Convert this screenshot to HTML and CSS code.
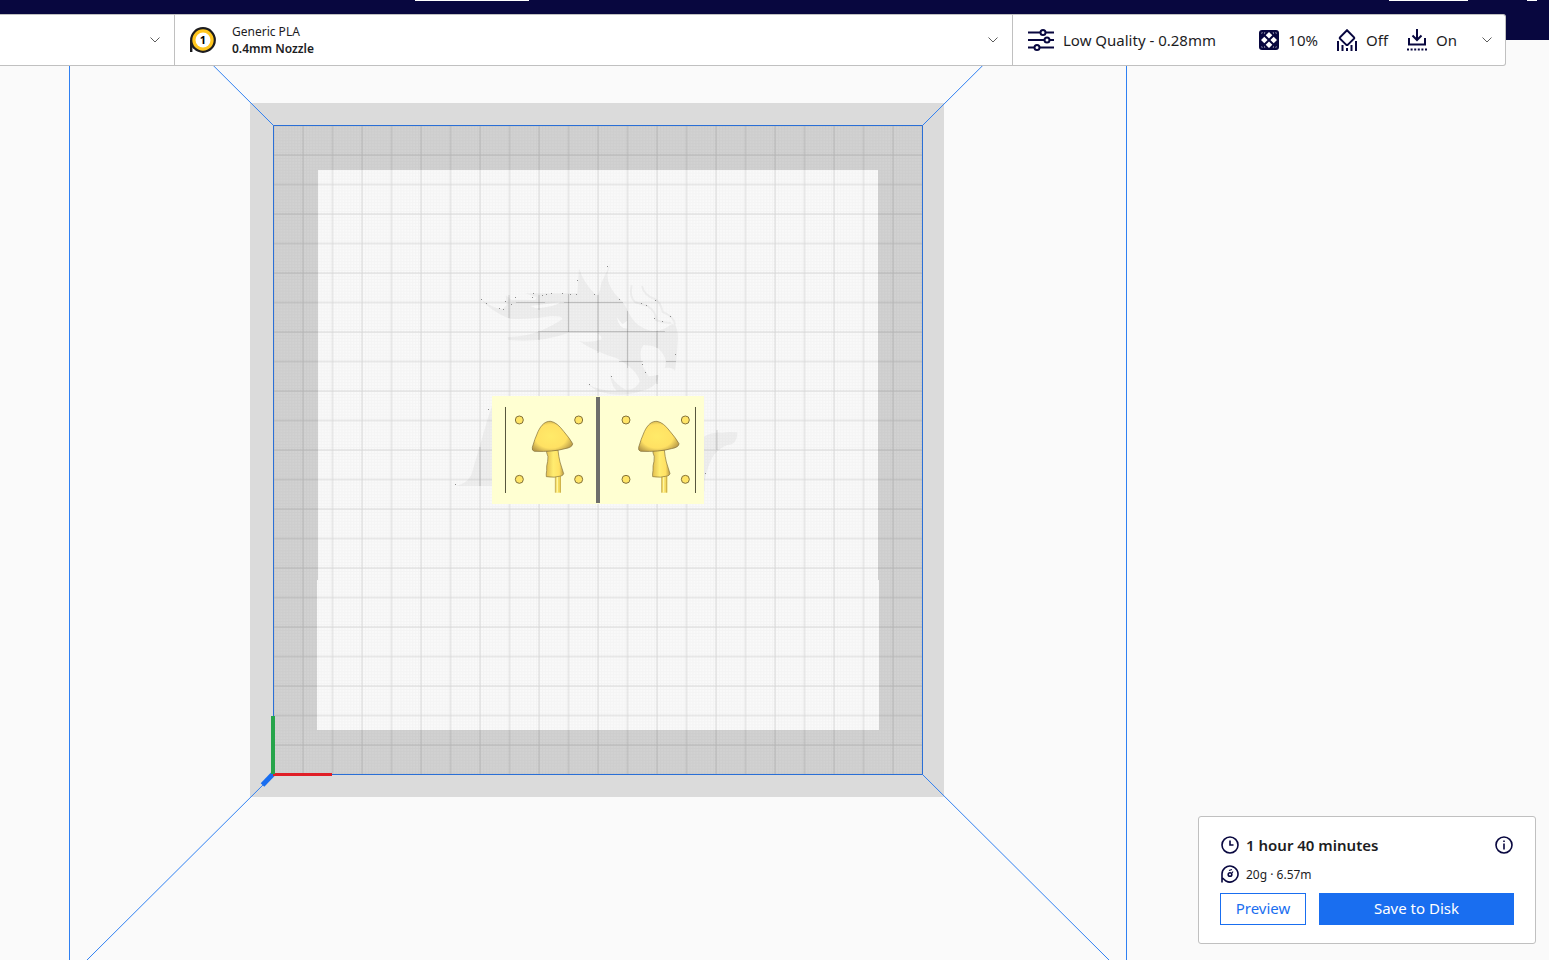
FILE: index.html
```html
<!DOCTYPE html>
<html lang="en">
<head>
<meta charset="utf-8">
<title>Print preparation</title>
<link rel="stylesheet" href="styles.css">
</head>
<body>
<div class="app">
  <svg class="scene" viewBox="0 0 1549 960" preserveAspectRatio="xMinYMin slice" role="img" aria-label="Build plate, top view">
    <defs>
      <pattern id="fine" x="273.5" y="125.5" width="2.95" height="2.95" patternUnits="userSpaceOnUse">
        <path d="M0 .5H2.95M.5 0V2.95" stroke="#000" stroke-opacity=".025" fill="none"/>
      </pattern>
      <pattern id="coarse" x="273.5" y="125.5" width="29.5" height="29.5" patternUnits="userSpaceOnUse">
        <path d="M0 0H29.5M0 29.5H29.5M0 0V29.5M29.5 0V29.5" stroke="#000" stroke-opacity=".12" fill="none"/>
      </pattern>
      <radialGradient id="cap" cx=".46" cy=".5" r=".6">
        <stop offset="0" stop-color="#ffea69"/><stop offset=".65" stop-color="#ffe163"/><stop offset="1" stop-color="#b89a48"/>
      </radialGradient>
      <linearGradient id="stem">
        <stop offset="0" stop-color="#e2bf50"/><stop offset=".4" stop-color="#ffec70"/><stop offset=".75" stop-color="#ffe163"/><stop offset="1" stop-color="#b89a48"/>
      </linearGradient>
      <g id="mushroom">
        <path d="M346 270H363V323H346Z" fill="#f5dc5e"/>
        <path d="M352 274V323" stroke="#fff6a0" stroke-width="4"/>
        <path d="M346 274V323M361 274V323" stroke="#b09440" stroke-width="2"/>
        <path d="M320 197L354 195Q356 215 360 231L371 266Q369 272 363 273Q344 279 319 275Q318 268 320 257Q319 242 323 229Q326 213 320 203Z" fill="url(#stem)" stroke="#82703a" stroke-width="2"/>
        <path d="M332 109C316 108 304 119 294 140Q284 162 277 187Q275 197 283 199Q340 201 375 191Q398 187 398 176Q389 160 371 139Q351 112 332 109Z" fill="url(#cap)" stroke="#7d6a36" stroke-width="2"/>
      </g>
      <g id="pin">
        <circle r="12" fill="#ffe566" stroke="#82703a" stroke-width="3"/>
      </g>
    </defs>

    <path d="M250 103H944V797H250Z" fill="#dbdbdb"/>
    <path d="M273 125H923V775H273Z" fill="#d2d2d2"/>
    <path d="M318 170H878V580H879V730H317V580H318Z" fill="#fafafa"/>

    <g fill="#000" fill-opacity=".045" transform="translate(440 250) scale(.33333)">
      <path d="M123 148Q155 174 187 177L200 165L197 135L214 149L285 150L290 142L255 130H412L417 54Q429 96 467 134H474Q482 118 484 98L512 39L502 73Q502 114 542 149C568 177 566 207 605 231Q650 258 694 223L705 223Q717 245 713 280L710 323L705 364Q700 350 674 354Q683 330 665 307Q653 285 610 286Q595 304 608 348L626 379L656 375C654 405 630 418 604 423Q540 445 473 424L436 399Q480 424 530 423C510 399 515 385 508 371Q529 405 557 419Q584 422 599 395Q592 360 530 325Q459 303 417 273Q454 280 484 268Q486 257 471 249L385 249Q299 280 204 270L203 261Q268 258 298 244Q343 225 366 208Q370 197 331 199Q277 209 208 206Q152 184 123 148Z"/>
      <path d="M575 106Q567 141 586 157L623 168Q650 187 648 210Q670 220 694 218M606 108Q612 136 644 147Q662 156 668 186Q701 198 705 223" fill="none" stroke="#000" stroke-opacity=".045" stroke-width="6"/>
      <path d="M530 201Q541 217 548 222L562 212V235Q538 238 530 201Z" fill="#fff" fill-opacity=".8"/>
      <path d="M270 168L360 157Q348 170 290 175Z" fill="#fff" fill-opacity=".8"/>
      <path d="M146 478L156 450V690H48Q82 681 94 656Z" transform="translate(0 18)"/>
      <path d="M792 542Q815 528 845 530Q865 526 892 529Q892 567 862 567Q842 575 823 595Q803 626 794 675V706H738V542Z" transform="translate(0 18)"/>
    </g>
    <path d="M273 125H923V775H273Z" fill="url(#fine)"/>
    <path d="M273 125H923V775H273Z" fill="url(#coarse)"/>
    <g stroke="#000" stroke-opacity=".14" fill="none">
      <path d="M568.5 294V332M538 331.5H665M516 302.5H545M564 302.5H623M627.5 311V368M619 361.5H643M666 361.5H676"/>
    </g>
    <g stroke="#000" stroke-opacity=".07" stroke-width="2" fill="none">
      <path d="M598 295V353M657 331V348M539 295V310M539 332V340M480 447V486M509 295V318M657 375V384M717 430V450"/>
    </g>
    <path d="M481 299h1m4 4h1m12 5h1m3 1h1m1-8h1m5 3h1m3-7h1m16 0h1m0-4h1m8 2h1m3-1h1m4-1h1m10 0h1m7 1h1m5 0h1m0-14h1m16 14h1m12-28h1m11 33h1m21 4h1m4 2h1m8-5h1m-2 18h1m7 3h1m7-5h1m4 38h1m-34 10h1m2 8h1m-35 4h1m-23 8h1M488 409h1M455 484h1M705 473h1" transform="translate(0 .5)" stroke="#8b8b8b"/>

    <g fill="none" stroke="#2f80f2">
      <path d="M69.5 0V960M1126.5 0V960"/>
      <path d="M147.500 0L273.500 125.500M1048.500 0L922.500 125.500M273.500 774.500L87 960M922.500 774.500L1109 960"/>
      <path d="M273.500 125.500H922.500V774.500H273.500Z" stroke="#2a6fd6"/>
    </g>
    <path d="M273 774L262.500 785" stroke="#196ef0" stroke-width="5"/>
    <path d="M273 774.500H332" stroke="#e01f27" stroke-width="3"/>
    <path d="M273 716V774" stroke="#26a44a" stroke-width="4"/>

    <g transform="translate(440 385) scale(.33333)">
      <path d="M156 33H792V357H156Z" fill="#ffffd2"/>
      <path d="M468 36H480V354H468Z" fill="#6e6e6b"/>
      <path d="M196.500 66V324M766.500 66V324" stroke="#55543a" stroke-width="3"/>
      <use href="#mushroom"/>
      <use href="#mushroom" x="319"/>
      <use href="#pin" x="238" y="105"/><use href="#pin" x="416" y="105"/>
      <use href="#pin" x="238" y="283"/><use href="#pin" x="416" y="283"/>
      <use href="#pin" x="558" y="105"/><use href="#pin" x="736" y="105"/>
      <use href="#pin" x="558" y="283"/><use href="#pin" x="736" y="283"/>
    </g>
  </svg>

  <header class="topbar">
    <div class="stages">
      <span class="stage-tab"></span>
      <span class="account-button"></span>
      <span class="avatar"></span>
    </div>
    <div class="toolbar">
      <button class="segment printer" type="button" aria-label="Select printer">
        <svg class="chevron" viewBox="0 0 10 6" aria-hidden="true"><path d="M.5.5L5 5L9.500.5"/></svg>
      </button>
      <button class="segment material" type="button">
        <svg class="spool" viewBox="0 0 26 26" aria-hidden="true">
          <path d="M1.200 25V13" stroke="#1d1d1f" stroke-width="2.400"/>
          <path d="M2 18L5 21" stroke="#1d1d1f" stroke-width="3"/>
          <circle cx="13" cy="13" r="11.800" fill="#ffc61e" stroke="#1d1d1f" stroke-width="2.200"/>
          <circle cx="13" cy="13" r="7.500" fill="#fff"/>
          <text class="spool-number" x="13" y="17" text-anchor="middle">1</text>
        </svg>
        <span class="material-text"><span>Generic PLA</span><strong>0.4mm Nozzle</strong></span>
        <svg class="chevron" viewBox="0 0 10 6" aria-hidden="true"><path d="M.5.5L5 5L9.500.5"/></svg>
      </button>
      <button class="segment settings" type="button">
        <svg class="sliders" viewBox="0 0 26 22" aria-hidden="true">
          <path d="M0 3.500H12M18 3.500H26M0 11H16M22 11H26M0 18.500H6M12 18.500H26"/>
          <circle cx="15" cy="3.500" r="2.500"/><circle cx="19" cy="11" r="2.500"/><circle cx="9" cy="18.500" r="2.500"/>
        </svg>
        <span class="profile">Low Quality - 0.28mm</span>
        <span class="stats">
          <span class="stat">
            <svg class="icon" viewBox="0 0 20 22" aria-hidden="true">
              <rect y="1" width="20" height="20" rx="3" fill="#08073f"/>
              <path d="M10 3L13.300 6.300L10 9.600L6.700 6.300ZM10 12.400L13.300 15.700L10 19L6.700 15.700ZM5.300 7.700L8.600 11L5.300 14.300L2 11ZM14.700 7.700L18 11L14.700 14.300L11.400 11Z" fill="#fff"/>
              <path d="M2.500 5V3.500H4M16 3.500H17.500V5M2.500 17V18.500H4M16 18.500H17.500V17M5 3.500H6.500L5 5ZM13.500 3.500H15V5ZM5 18.500H6.500L5 17ZM13.500 18.500H15V17Z" fill="#d5d5e2"/>
            </svg><span>10%</span></span>
          <span class="stat">
            <svg class="icon line" viewBox="0 0 20 22" aria-hidden="true">
              <path d="M10 1.200L17 8.300Q17.500 9 17 9.700L11 15.600Q10 16.300 9 15.600L3 9.700Q2.500 9 3 8.300Z"/>
              <path d="M1 12V22M5.500 16V22M10 19V22M14.500 16V22M19 12V22"/>
            </svg><span>Off</span></span>
          <span class="stat">
            <svg class="icon line" viewBox="0 0 20 22" aria-hidden="true">
              <path d="M10 0V10.500M5.500 6.500L10 11L14.500 6.500M2 9V15.500H18V9"/>
              <path d="M0 20.500H20" stroke-dasharray="2 1.600"/>
            </svg><span>On</span></span>
        </span>
        <svg class="chevron" viewBox="0 0 10 6" aria-hidden="true"><path d="M.5.5L5 5L9.500.5"/></svg>
      </button>
    </div>
  </header>

  <section class="job" aria-label="Print job">
    <div class="job-time">
      <svg class="small-icon" viewBox="0 0 18 18" aria-hidden="true"><circle cx="9" cy="9" r="8"/><path d="M9 4.500V9H12.500"/></svg>
      <strong>1 hour 40 minutes</strong>
      <button class="info" type="button" aria-label="Print time details">
        <svg class="small-icon" viewBox="0 0 18 18" aria-hidden="true"><circle cx="9" cy="9" r="8"/><path d="M9 7.500V13.500M9 4.500V6"/></svg>
      </button>
    </div>
    <div class="job-material">
      <svg class="small-icon" viewBox="0 0 18 18" aria-hidden="true"><path d="M1 17.500V9A8 8 0 1 1 5 16L1.500 13"/><circle cx="9" cy="9.500" r="1.800"/><path d="M8 5.500L11 4.500M11 8L12 6.500" stroke-width="1.200"/></svg>
      <span>20g · 6.57m</span>
    </div>
    <div class="job-actions">
      <button class="action preview" type="button">Preview</button>
      <button class="action save" type="button">Save to Disk</button>
    </div>
  </section>
</div>
</body>
</html>
```
FILE: styles.css
```css
* {
  box-sizing: border-box;
}

body {
  margin: 0;
  background: #fafafa;
  color: #1d1d1f;
  font-family: "Noto Sans", sans-serif;
  font-size: 15px;
}

button {
  margin: 0;
  font: inherit;
  color: inherit;
  cursor: pointer;
}

.app {
  position: relative;
  display: flex;
  flex-direction: column;
  justify-content: space-between;
  min-height: 100vh;
  overflow: hidden;
}

/* The 3D view lies behind all panels. */
.scene {
  position: absolute;
  inset: 0;
  width: 100%;
  height: 100%;
}

.topbar {
  position: relative;
  height: 40px;
  background: #08073f;
}

.stages {
  display: flex;
  align-items: flex-start;
  height: 14px;
  padding: 0 12px 0 415px;
}

.stage-tab,
.account-button,
.avatar {
  height: 1px;
  background: #fff;
}

.stage-tab {
  width: 114px;
}

.account-button {
  width: 79px;
  margin-left: auto;
}

.avatar {
  width: 10px;
  margin-left: 59px;
}

.toolbar {
  display: flex;
  height: 52px;
  margin-right: 43px;
  background: #fff;
  border: 1px solid #c0c0c0;
  border-left: 0;
  border-radius: 0 3px 3px 0;
}

.segment {
  display: flex;
  align-items: center;
  padding: 0 14px;
  background: none;
  border: 0;
  text-align: left;
}

.segment + .segment {
  border-left: 1px solid #c0c0c0;
}

.printer {
  width: 174px;
}

.material {
  flex: 1;
}

.settings {
  width: 493px;
  padding-right: 13px;
}

.chevron {
  width: 10px;
  height: 6px;
  margin-left: auto;
  fill: none;
  stroke: #5c5c5c;
}

.spool {
  width: 26px;
  height: 26px;
  margin: 0 16px 0 1px;
}

.spool-number {
  font-size: 11px;
  font-weight: 700;
}

.material-text {
  display: grid;
  font-size: 12px;
  line-height: 17px;
}

.material-text strong {
  font-weight: 600;
}

.profile,
.stat span {
  padding-bottom: 1px;
}

.sliders {
  width: 26px;
  height: 22px;
  margin: 0 9px 0 1px;
  fill: none;
  stroke: #08073f;
  stroke-width: 2;
}

.stats {
  display: flex;
  gap: 19px;
  margin-left: auto;
  margin-right: 25px;
}

.settings .chevron {
  margin-left: 0;
}

.stat {
  display: flex;
  align-items: center;
  gap: 9px;
}

.icon {
  width: 20px;
  height: 22px;
}

.line {
  fill: none;
  stroke: #08073f;
  stroke-width: 2;
}

.small-icon {
  width: 18px;
  height: 18px;
  fill: none;
  stroke: #08073f;
  stroke-width: 1.6;
}

.job {
  position: relative;
  align-self: flex-end;
  width: 338px;
  margin: 0 13px 16px 0;
  padding: 16px 21px 18px;
  background: #fff;
  border: 1px solid #c0c0c0;
  border-radius: 3px;
}

.job-time,
.job-material {
  display: flex;
  align-items: center;
  gap: 7px;
  padding: 0 1px;
}

.job-time {
  height: 24px;
}

.job-time strong {
  padding-bottom: 1px;
  font-weight: 600;
}

.info {
  display: flex;
  margin-left: auto;
  padding: 0;
  background: none;
  border: 0;
}

.small-icon {
  flex: none;
}

.job-material {
  height: 18px;
  margin: 8px 0 10px;
  font-size: 12px;
}

.job-actions {
  display: flex;
  gap: 13px;
}

.action {
  height: 32px;
  padding: 0 0 2px;
  border: 1px solid #196ef0;
}

.preview {
  width: 86px;
  background: #fff;
  color: #196ef0;
}

.save {
  flex: 1;
  background: #196ef0;
  color: #fff;
}
```
